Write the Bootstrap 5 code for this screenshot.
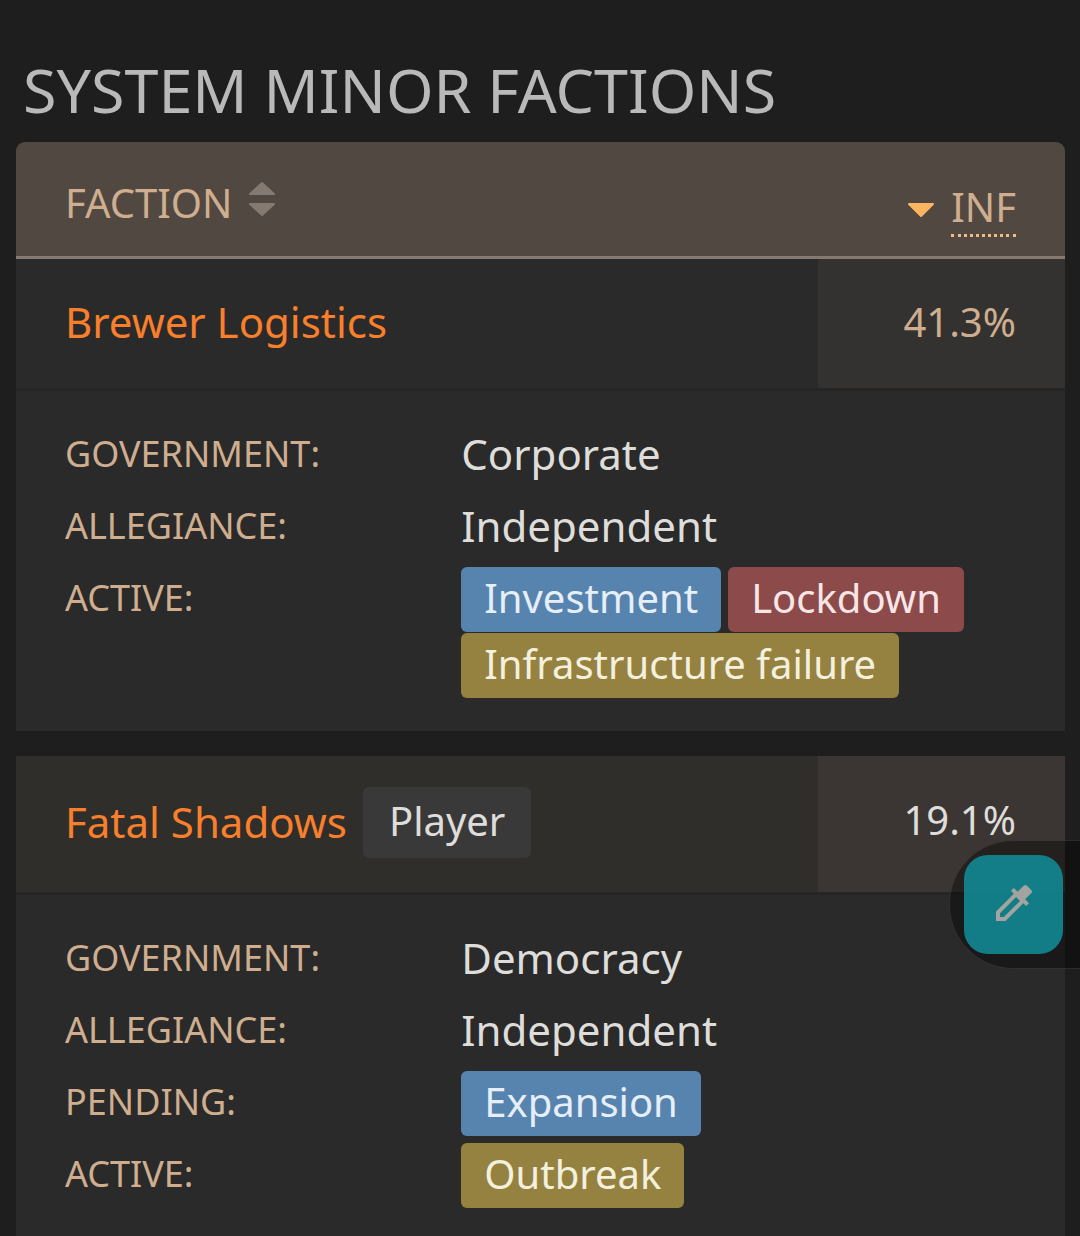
<!DOCTYPE html>
<html lang="en" data-bs-theme="dark">
<head>
<meta charset="utf-8">
<meta name="viewport" content="width=device-width, initial-scale=1">
<title>System minor factions</title>
<link href="https://cdn.jsdelivr.net/npm/bootstrap@5.3.0/dist/css/bootstrap.min.css" rel="stylesheet">
<style>
  body { background: #1e1e1e; color: #dfddda; font-family: "Noto Sans", sans-serif; font-size: 42px; line-height: 66px; overflow: hidden; }
  .page-wrap { padding: 50px 15px 0 16px; }
  .page-title { font-size: 61px; line-height: 80px; color: #b9b9b9; margin: 0 7px 12px; font-weight: 400; text-transform: uppercase; }
  .factions { width: 100%; border-collapse: separate; border-spacing: 0; table-layout: fixed; }
  .factions th, .factions td { padding: 0 49px; vertical-align: middle; }
  .factions .inf-col { width: 247px; text-align: right; white-space: nowrap; }
  .factions thead th { height: 117px; padding-top: 8px; background: #514842; border-bottom: 3px solid #857a71; color: #cfae8f; font-weight: 400; text-transform: uppercase; }
  .factions thead th:first-child { border-top-left-radius: 9px; }
  .factions thead th:last-child { border-top-right-radius: 9px; }
  .sort-btn { color: inherit; background: none; border: 0; padding: 0; text-transform: uppercase; font-size: 40px; line-height: 60px; }
  abbr.inf-label[title] { border-bottom: 3px dotted #eebd84; text-decoration: none; cursor: help; line-height: 54px; }
  .faction-row > * { height: 132px; background: #2a2a2a; border-bottom: 3px solid #252525; font-weight: 400; }
  .factions .faction-row > * { padding-bottom: 4px; }
  .faction-row .inf-col { background: #343230; color: #cfae8f; font-size: 40px; }
  .player-row > * { height: 139px; background: #302e2b; }
  .player-row .inf-col { background: #3b3633; color: #dfddda; }
  .factions .player-row .inf-col { padding-bottom: 8px; }
  .faction-link { color: #f87f2b; text-decoration: none; }
  .player-tag { background: #393939; color: #dfddda; border-radius: 6px; padding: 0 26px 3px; font-size: 40px; line-height: 68px; }
  .detail-row > td { background: #2a2a2a; }
  .factions .detail-row > td { padding-top: 32px; padding-bottom: 32px; }
  .gap-below > td { border-bottom: 25px solid #1e1e1e; }
  .facts { margin: 0; display: grid; gap: 6px; }
  .facts dt { font-weight: 400; color: #cfae8f; text-transform: uppercase; font-size: 36px; line-height: 62px; padding-bottom: 4px; }
  .facts dd { margin: 0; line-height: 62px; padding-bottom: 4px; }
  .facts dd.states { display: flex; flex-wrap: wrap; column-gap: 7px; row-gap: 1px; padding-bottom: 1px; }
  .state-tag { font-size: 40px; line-height: 62px; padding: 0 23px 3px; border-radius: 6px; white-space: nowrap; }
  .state-blue { background: #5684ae; color: #e6eef8; }
  .state-red { background: #8c4a4b; color: #f8e6e6; }
  .state-gold { background: #968240; color: #f4f0de; }
  .picker-dock { position: fixed; right: -2px; top: 840px; width: 133px; height: 129px; padding: 14px; background: rgba(0,0,0,.4); border: 1px solid rgba(120,120,120,.25); border-radius: 64px 0 0 64px; }
  .picker-btn { width: 99px; height: 99px; border: 0; border-radius: 24px; background: rgba(18,142,154,.86); color: #a3a3a0; }
</style>
</head>
<body>
<main class="page-wrap">
  <h1 class="page-title">System minor factions</h1>
  <table class="factions">
    <thead>
      <tr>
        <th scope="col">
          <button type="button" class="sort-btn d-flex align-items-center">Faction
            <svg class="ms-3 mb-2" width="28" height="36" viewBox="0 0 28 36" fill="#857a71" stroke="#857a71" stroke-width="2" stroke-linejoin="round" aria-hidden="true"><path d="M2 13L14 2L26 13Z"/><path d="M2 23L14 34L26 23Z"/></svg>
          </button>
        </th>
        <th scope="col" class="inf-col">
          <button type="button" class="sort-btn d-inline-flex align-items-center">
            <svg class="me-3 mt-1" width="28" height="16" viewBox="0 0 28 16" fill="#ffb460" stroke="#ffb460" stroke-width="2" stroke-linejoin="round" aria-hidden="true"><path d="M2 2H26L14 14Z"/></svg>
            <abbr class="inf-label" title="Influence">Inf</abbr>
          </button>
        </th>
      </tr>
    </thead>
    <tbody>
      <tr class="faction-row">
        <th scope="row"><a href="#" class="faction-link">Brewer Logistics</a></th>
        <td class="inf-col">41.3%</td>
      </tr>
      <tr class="detail-row gap-below">
        <td colspan="2">
          <dl class="facts">
            <div class="row g-0"><dt class="col-5">Government:</dt><dd class="col-7">Corporate</dd></div>
            <div class="row g-0"><dt class="col-5">Allegiance:</dt><dd class="col-7">Independent</dd></div>
            <div class="row g-0"><dt class="col-5">Active:</dt><dd class="col-7 states"><span class="state-tag state-blue">Investment</span><span class="state-tag state-red">Lockdown</span><span class="state-tag state-gold">Infrastructure failure</span></dd></div>
          </dl>
        </td>
      </tr>
      <tr class="faction-row player-row">
        <th scope="row"><div class="d-flex align-items-center gap-3"><a href="#" class="faction-link">Fatal Shadows</a><span class="player-tag">Player</span></div></th>
        <td class="inf-col">19.1%</td>
      </tr>
      <tr class="detail-row">
        <td colspan="2">
          <dl class="facts">
            <div class="row g-0"><dt class="col-5">Government:</dt><dd class="col-7">Democracy</dd></div>
            <div class="row g-0"><dt class="col-5">Allegiance:</dt><dd class="col-7">Independent</dd></div>
            <div class="row g-0"><dt class="col-5">Pending:</dt><dd class="col-7 states"><span class="state-tag state-blue">Expansion</span></dd></div>
            <div class="row g-0"><dt class="col-5">Active:</dt><dd class="col-7 states"><span class="state-tag state-gold">Outbreak</span></dd></div>
          </dl>
        </td>
      </tr>
    </tbody>
  </table>
</main>
<aside class="picker-dock">
  <button type="button" class="picker-btn d-flex align-items-center justify-content-center p-0 pb-1" aria-label="Pick colour">
    <svg width="48" height="48" viewBox="0 0 24 24" fill="currentColor" aria-hidden="true"><path d="M20.710 5.630l-2.340-2.340a1 1 0 0 0-1.410 0l-3.120 3.120-1.930-1.910-1.410 1.410 1.420 1.420L3 16.250V21h4.750l8.920-8.920 1.420 1.420 1.410-1.410-1.920-1.920 3.120-3.120c.4-.4.4-1.030.01-1.420zM6.920 19H5v-1.920l8.060-8.060 1.920 1.920z"/></svg>
  </button>
</aside>
<script src="https://cdn.jsdelivr.net/npm/bootstrap@5.3.0/dist/js/bootstrap.bundle.min.js"></script>
</body>
</html>
